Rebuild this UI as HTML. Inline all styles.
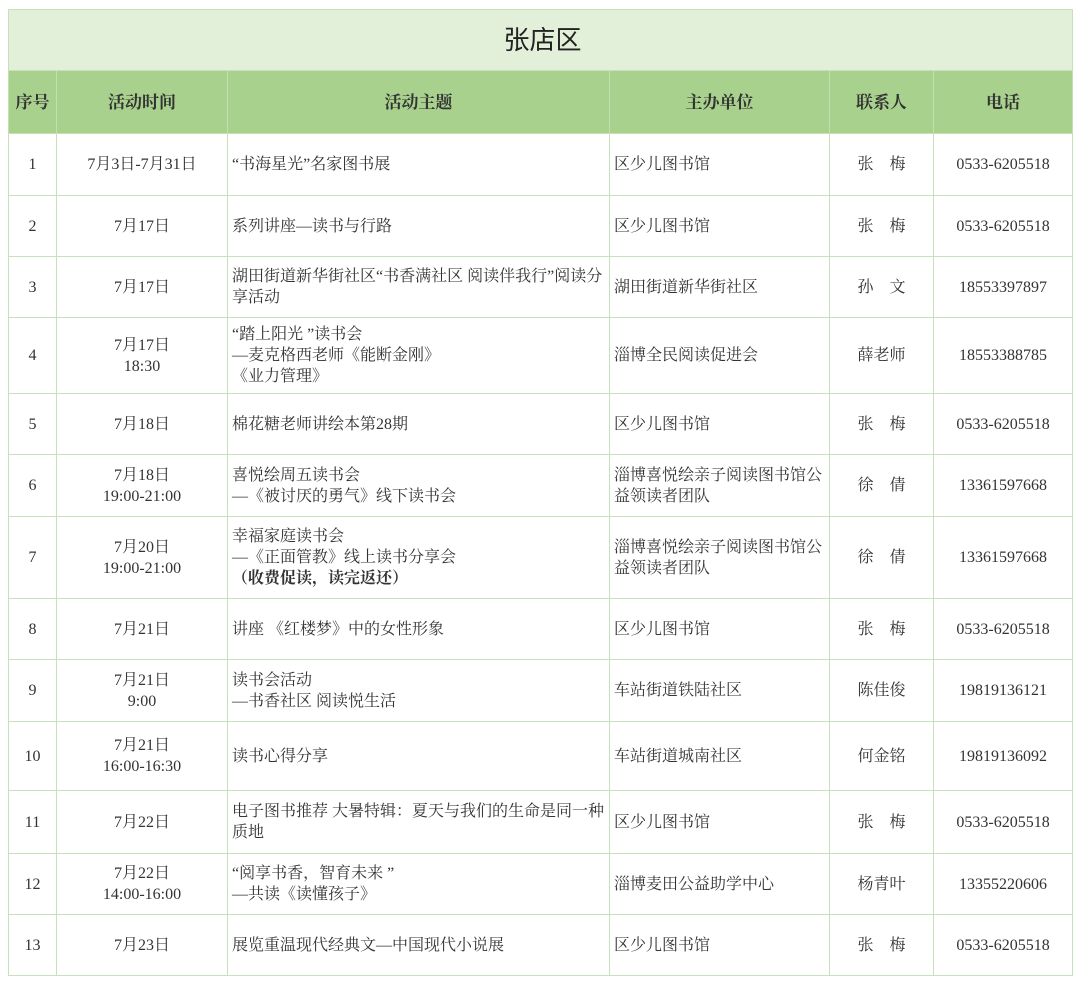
<!DOCTYPE html>
<html><head><meta charset="utf-8"><style>
body{margin:0;background:#fff;width:1080px;height:985px;overflow:hidden;}
table{position:absolute;left:8px;top:9px;border-collapse:collapse;table-layout:fixed;width:1064px;font-family:"Liberation Serif","Noto Serif CJK SC",serif;font-size:16px;color:#333;}
td{border:1.5px solid #c8dfbb;padding:0 0 0 4px;line-height:21px;vertical-align:middle;}
td.c{text-align:center;padding:0;}
tr.t td{background:#e2f0d9;text-align:center;font-family:"Liberation Sans","Noto Sans CJK SC",sans-serif;font-size:26px;color:#222;}
tr.h td{background:#a9d18e;text-align:center;font-weight:bold;font-size:17px;padding:0;color:#333;}
tr.h td{border-color:#c3e0ae;}
</style></head><body>
<table>
<colgroup><col style="width:48px"><col style="width:171px"><col style="width:382px"><col style="width:220px"><col style="width:104px"><col style="width:139px"></colgroup>
<tr class="t" style="height:61px"><td colspan="6">张店区</td></tr>
<tr class="h" style="height:63px"><td>序号</td><td>活动时间</td><td>活动主题</td><td>主办单位</td><td>联系人</td><td>电话</td></tr>
<tr style="height:62px"><td class="c">1</td><td class="c">7月3日-7月31日</td><td>“书海星光”名家图书展</td><td>区少儿图书馆</td><td class="c">张　梅</td><td class="c">0533-6205518</td></tr>
<tr style="height:61px"><td class="c">2</td><td class="c">7月17日</td><td>系列讲座—读书与行路</td><td>区少儿图书馆</td><td class="c">张　梅</td><td class="c">0533-6205518</td></tr>
<tr style="height:61px"><td class="c">3</td><td class="c">7月17日</td><td>湖田街道新华街社区“书香满社区 阅读伴我行”阅读分享活动</td><td>湖田街道新华街社区</td><td class="c">孙　文</td><td class="c">18553397897</td></tr>
<tr style="height:76px"><td class="c">4</td><td class="c">7月17日<br>18:30</td><td>“踏上阳光 ”读书会<br>—麦克格西老师《能断金刚》<br>《业力管理》</td><td>淄博全民阅读促进会</td><td class="c">薛老师</td><td class="c">18553388785</td></tr>
<tr style="height:61px"><td class="c">5</td><td class="c">7月18日</td><td>棉花糖老师讲绘本第28期</td><td>区少儿图书馆</td><td class="c">张　梅</td><td class="c">0533-6205518</td></tr>
<tr style="height:62px"><td class="c">6</td><td class="c">7月18日<br>19:00-21:00</td><td>喜悦绘周五读书会<br>—《被讨厌的勇气》线下读书会</td><td>淄博喜悦绘亲子阅读图书馆公益领读者团队</td><td class="c">徐　倩</td><td class="c">13361597668</td></tr>
<tr style="height:82px"><td class="c">7</td><td class="c">7月20日<br>19:00-21:00</td><td>幸福家庭读书会<br>—《正面管教》线上读书分享会<br><b>（收费促读，读完返还）</b></td><td>淄博喜悦绘亲子阅读图书馆公益领读者团队</td><td class="c">徐　倩</td><td class="c">13361597668</td></tr>
<tr style="height:61px"><td class="c">8</td><td class="c">7月21日</td><td>讲座 《红楼梦》中的女性形象</td><td>区少儿图书馆</td><td class="c">张　梅</td><td class="c">0533-6205518</td></tr>
<tr style="height:62px"><td class="c">9</td><td class="c">7月21日<br>9:00</td><td>读书会活动<br>—书香社区 阅读悦生活</td><td>车站街道铁陆社区</td><td class="c">陈佳俊</td><td class="c">19819136121</td></tr>
<tr style="height:69px"><td class="c">10</td><td class="c">7月21日<br>16:00-16:30</td><td>读书心得分享</td><td>车站街道城南社区</td><td class="c">何金铭</td><td class="c">19819136092</td></tr>
<tr style="height:63px"><td class="c">11</td><td class="c">7月22日</td><td>电子图书推荐 大暑特辑：夏天与我们的生命是同一种质地</td><td>区少儿图书馆</td><td class="c">张　梅</td><td class="c">0533-6205518</td></tr>
<tr style="height:61px"><td class="c">12</td><td class="c">7月22日<br>14:00-16:00</td><td>“阅享书香，智育未来 ”<br>—共读《读懂孩子》</td><td>淄博麦田公益助学中心</td><td class="c">杨青叶</td><td class="c">13355220606</td></tr>
<tr style="height:61px"><td class="c">13</td><td class="c">7月23日</td><td>展览重温现代经典文—中国现代小说展</td><td>区少儿图书馆</td><td class="c">张　梅</td><td class="c">0533-6205518</td></tr>
</table>
</body></html>
